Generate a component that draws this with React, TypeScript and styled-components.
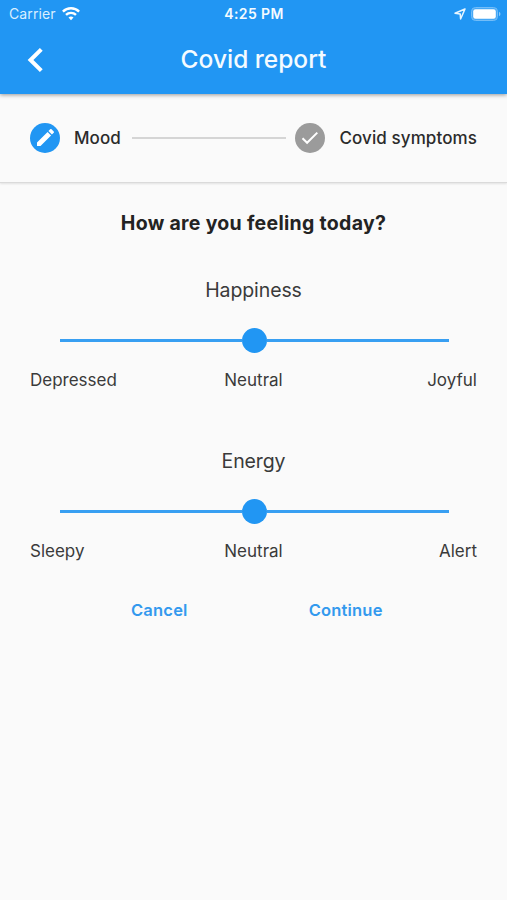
import React from "react";
import styled, { createGlobalStyle } from "styled-components";

const Global = createGlobalStyle`
  * { box-sizing: border-box; }
  body { margin: 0; background: #fafafa; }
`;

const Screen = styled.div`
  width: 507px;
  height: 900px;
  overflow: hidden;
  display: flex;
  flex-direction: column;
  background: #fafafa;
  color: #3a3a3a;
  font-family: Inter, "Liberation Sans", sans-serif;
`;

const Header = styled.header`
  height: 94px;
  flex: none;
  background: #2196f3;
  color: #f4fbff;
  box-shadow: 0 1px 4px rgba(0, 0, 0, 0.4);
  z-index: 1;
`;

const StatusBar = styled.div`
  height: 27px;
  padding: 0 6px 0 9px;
  display: grid;
  grid-template-columns: 1fr auto 1fr;
  align-items: center;
`;

const StatusGroup = styled.div<{ $end?: boolean }>`
  display: flex;
  align-items: center;
  gap: ${(p) => (p.$end ? 5 : 6)}px;
  justify-content: ${(p) => (p.$end ? "flex-end" : "flex-start")};
`;

const Carrier = styled.span`
  font-size: 14px;
  line-height: 27px;
  letter-spacing: 0.1px;
  color: #d9efff;
`;

const Clock = styled.time`
  font-size: 14px;
  font-weight: 600;
  line-height: 27px;
  letter-spacing: 0.4px;
  margin-right: 2px;
`;

const AppBar = styled.div`
  height: 67px;
  display: grid;
  grid-template-columns: 70px 1fr 70px;
  align-items: center;
`;

const BackButton = styled.button`
  height: 67px;
  padding: 0 0 2px 27px;
  border: 0;
  background: none;
  display: flex;
  align-items: center;
`;

const Title = styled.h1`
  margin: 0;
  padding-bottom: 2px;
  text-align: center;
  font-size: 24.5px;
  font-weight: 500;
  line-height: 65px;
`;

const Stepper = styled.nav`
  height: 89px;
  flex: none;
  padding: 0 30px 1px;
  display: flex;
  align-items: center;
  border-bottom: 1px solid #dadada;
  box-shadow: 0 1px 2px rgba(0, 0, 0, 0.1);
`;

const StepBadge = styled.span<{ $active?: boolean }>`
  width: 30px;
  height: 30px;
  flex: none;
  border-radius: 50%;
  margin-right: 14px;
  display: flex;
  align-items: center;
  justify-content: center;
  background: ${(p) => (p.$active ? "#2196f3" : "#9b9b9b")};
`;

const StepLabel = styled.span`
  font-size: 17px;
  font-weight: 500;
  white-space: nowrap;
  color: #2b2b2b;
  letter-spacing: 0.1px;
`;

const StepLine = styled.span`
  flex: 1;
  height: 2px;
  margin: 0 9px 0 11px;
  background: #d5d5d5;
`;

const Content = styled.main`
  padding: 26px 30px 0;
`;

const Question = styled.h2`
  margin: 0;
  text-align: center;
  font-size: 19.5px;
  line-height: 28px;
  font-weight: 700;
  letter-spacing: 0.3px;
  color: #232323;
`;

const Scale = styled.section`
  height: 171px;
`;

const Scales = styled.div`
  padding-top: 39px;
`;

const ScaleTitle = styled.h3`
  margin: 0;
  text-align: center;
  font-size: 19.5px;
  line-height: 28px;
  font-weight: 400;
  letter-spacing: -0.1px;
`;

const Track = styled.div`
  height: 25px;
  margin: 24px 28px 0 30px;
  display: grid;
  grid-template-columns: 182px 25px 1fr;
  align-items: center;
`;

const Rail = styled.span`
  height: 3px;
  background: #389ff2;
`;

const Thumb = styled.span`
  height: 25px;
  border-radius: 50%;
  background: #2196f3;
`;

const Labels = styled.div`
  margin-top: 15px;
  display: grid;
  grid-template-columns: 1fr auto 1fr;
  font-size: 17px;
  line-height: 24px;
  span:last-child { text-align: right; }
`;

const Actions = styled.div`
  display: flex;
  padding-left: 101px;
  gap: 121px;
  margin-top: -20px;
`;

const Action = styled.button`
  border: 0;
  padding: 0;
  background: none;
  color: #3399ee;
  font-family: inherit;
  font-size: 16.5px;
  font-weight: 600;
  line-height: 24px;
  letter-spacing: 0.2px;
`;

function MoodScale({ title, labels }: { title: string; labels: string[] }) {
  return (
    <Scale>
      <ScaleTitle>{title}</ScaleTitle>
      <Track><Rail /><Thumb /><Rail /></Track>
      <Labels>{labels.map((l) => <span key={l}>{l}</span>)}</Labels>
    </Scale>
  );
}

export default function App() {
  return (
    <Screen>
      <Global />
      <Header>
        <StatusBar>
          <StatusGroup>
            <Carrier>Carrier</Carrier>
            <svg width="18" height="14" viewBox="0 0 18 14" fill="none" stroke="#fff" strokeWidth="2.4">
              <path d="M.9 4.6a11.5 11.5 0 0 1 16.2 0" />
              <path d="M4 7.9a7.1 7.1 0 0 1 10 0" />
              <path d="M9 13.2 6.5 10.6a3.6 3.6 0 0 1 5 0z" fill="#fff" stroke="none" />
            </svg>
          </StatusGroup>
          <Clock>4:25 PM</Clock>
          <StatusGroup $end>
            <svg width="12" height="12" viewBox="0 0 12 12" fill="none" stroke="#e8f6ff" strokeWidth="1.5" strokeLinejoin="round">
              <path d="M11 1 1 5.3l5.2.6.4 5.1z" />
            </svg>
            <svg width="30" height="14" viewBox="0 0 30 14">
              <rect x=".5" y=".5" width="26" height="13" rx="4" fill="#47a8f5" stroke="#73bdf8" />
              <rect x="2.2" y="2.2" width="22.6" height="9.6" rx="2.3" fill="#fff" />
              <path d="M28 4.8c2 .8 2 3.6 0 4.4z" fill="#8bc9fa" />
            </svg>
          </StatusGroup>
        </StatusBar>
        <AppBar>
          <BackButton aria-label="Back">
            <svg width="17" height="24" viewBox="0 0 17 24" fill="none" stroke="#fff" strokeWidth="4">
              <path d="M14.3 1.4 3.5 12l10.8 10.6" />
            </svg>
          </BackButton>
          <Title>Covid report</Title>
        </AppBar>
      </Header>
      <Stepper>
        <StepBadge $active>
          <svg width="17" height="17" viewBox="0 0 18 18" fill="#fff">
            <path d="M0 14.3V18h3.7L14.9 6.8l-3.7-3.7zM17.7 4a1 1 0 0 0 0-1.4L15.4.3a1 1 0 0 0-1.4 0l-1.9 1.9 3.7 3.7z" />
          </svg>
        </StepBadge>
        <StepLabel>Mood</StepLabel>
        <StepLine />
        <StepBadge>
          <svg width="18" height="14" viewBox="0 0 18 14" fill="none" stroke="#fff" strokeWidth="2">
            <path d="m1.5 7.2 4.6 4.6L16.3 1.6" />
          </svg>
        </StepBadge>
        <StepLabel>Covid symptoms</StepLabel>
      </Stepper>
      <Content>
        <Question>How are you feeling today?</Question>
        <Scales>
          <MoodScale title="Happiness" labels={["Depressed", "Neutral", "Joyful"]} />
          <MoodScale title="Energy" labels={["Sleepy", "Neutral", "Alert"]} />
        </Scales>
        <Actions>
          <Action>Cancel</Action>
          <Action>Continue</Action>
        </Actions>
      </Content>
    </Screen>
  );
}
